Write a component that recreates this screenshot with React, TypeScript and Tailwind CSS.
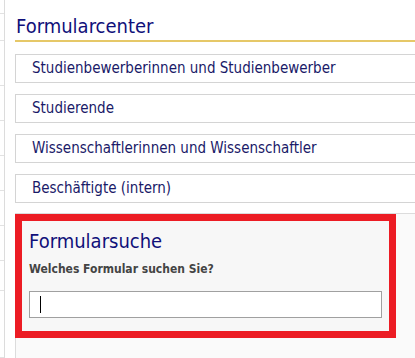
import React from 'react';

const groups = [
  'Studienbewerberinnen und Studienbewerber',
  'Studierende',
  'Wissenschaftlerinnen und Wissenschaftler',
  'Beschäftigte (intern)',
];

// row heights of the cut-off sidebar on the left
const sideRows = [14, 27, 45, 35, 35, 35, 35, 35, 30, 67];

export default function App() {
  return (
    <div className="flex w-[415px] h-[358px] overflow-hidden bg-white font-['DejaVu_Sans_Condensed','DejaVu_Sans',sans-serif]">
      {/* Sidebar edge */}
      <div className="w-[5px] shrink-0 border-r border-[#dcdcdc] flex flex-col">
        {sideRows.map((h, i) => (
          <div key={i} className="border-b border-[#e2e2e2] shrink-0" style={{ height: h }} />
        ))}
      </div>

      {/* Main */}
      <div className="ml-[10px] w-[440px] shrink-0">
        <h1 className="mt-[13px] pl-px text-[20px] leading-[26px] text-[#10107a]">Formularcenter</h1>
        <div className="mt-px border-b-2 border-[#e6c868]" />

        <div className="mt-[12px] flex flex-col">
          {groups.map((g) => (
            <div
              key={g}
              className="h-[29px] mb-[11px] border border-[#d4d4d4] flex items-center pl-[16px] text-[15px] text-[#1a1a68]"
            >
              {g}
            </div>
          ))}
        </div>

        {/* Search panel */}
        <div className="-mt-px h-[200px] border-t border-l border-[#dcdcdc] bg-[#fafafa]">
          <div className="-ml-px w-[381px] border-[7px] border-[#ec1c24] bg-[#f7f7f7] pt-[7px] pl-[7px] pr-[7px] pb-[13px]">
            <h2 className="text-[20px] leading-[26px] text-[#10107a]">Formularsuche</h2>
            <p className="mt-[7px] text-[12px] leading-[16px] font-bold text-[#444444]">Welches Formular suchen Sie?</p>
            <div className="relative mt-[14px]">
              <input
                type="text"
                className="block w-full h-[27px] border border-[#a0a0a0] bg-white outline-none"
              />
              <span className="absolute left-[11px] top-[5px] h-[17px] w-px bg-black" />
            </div>
          </div>
        </div>
      </div>
    </div>
  );
}
